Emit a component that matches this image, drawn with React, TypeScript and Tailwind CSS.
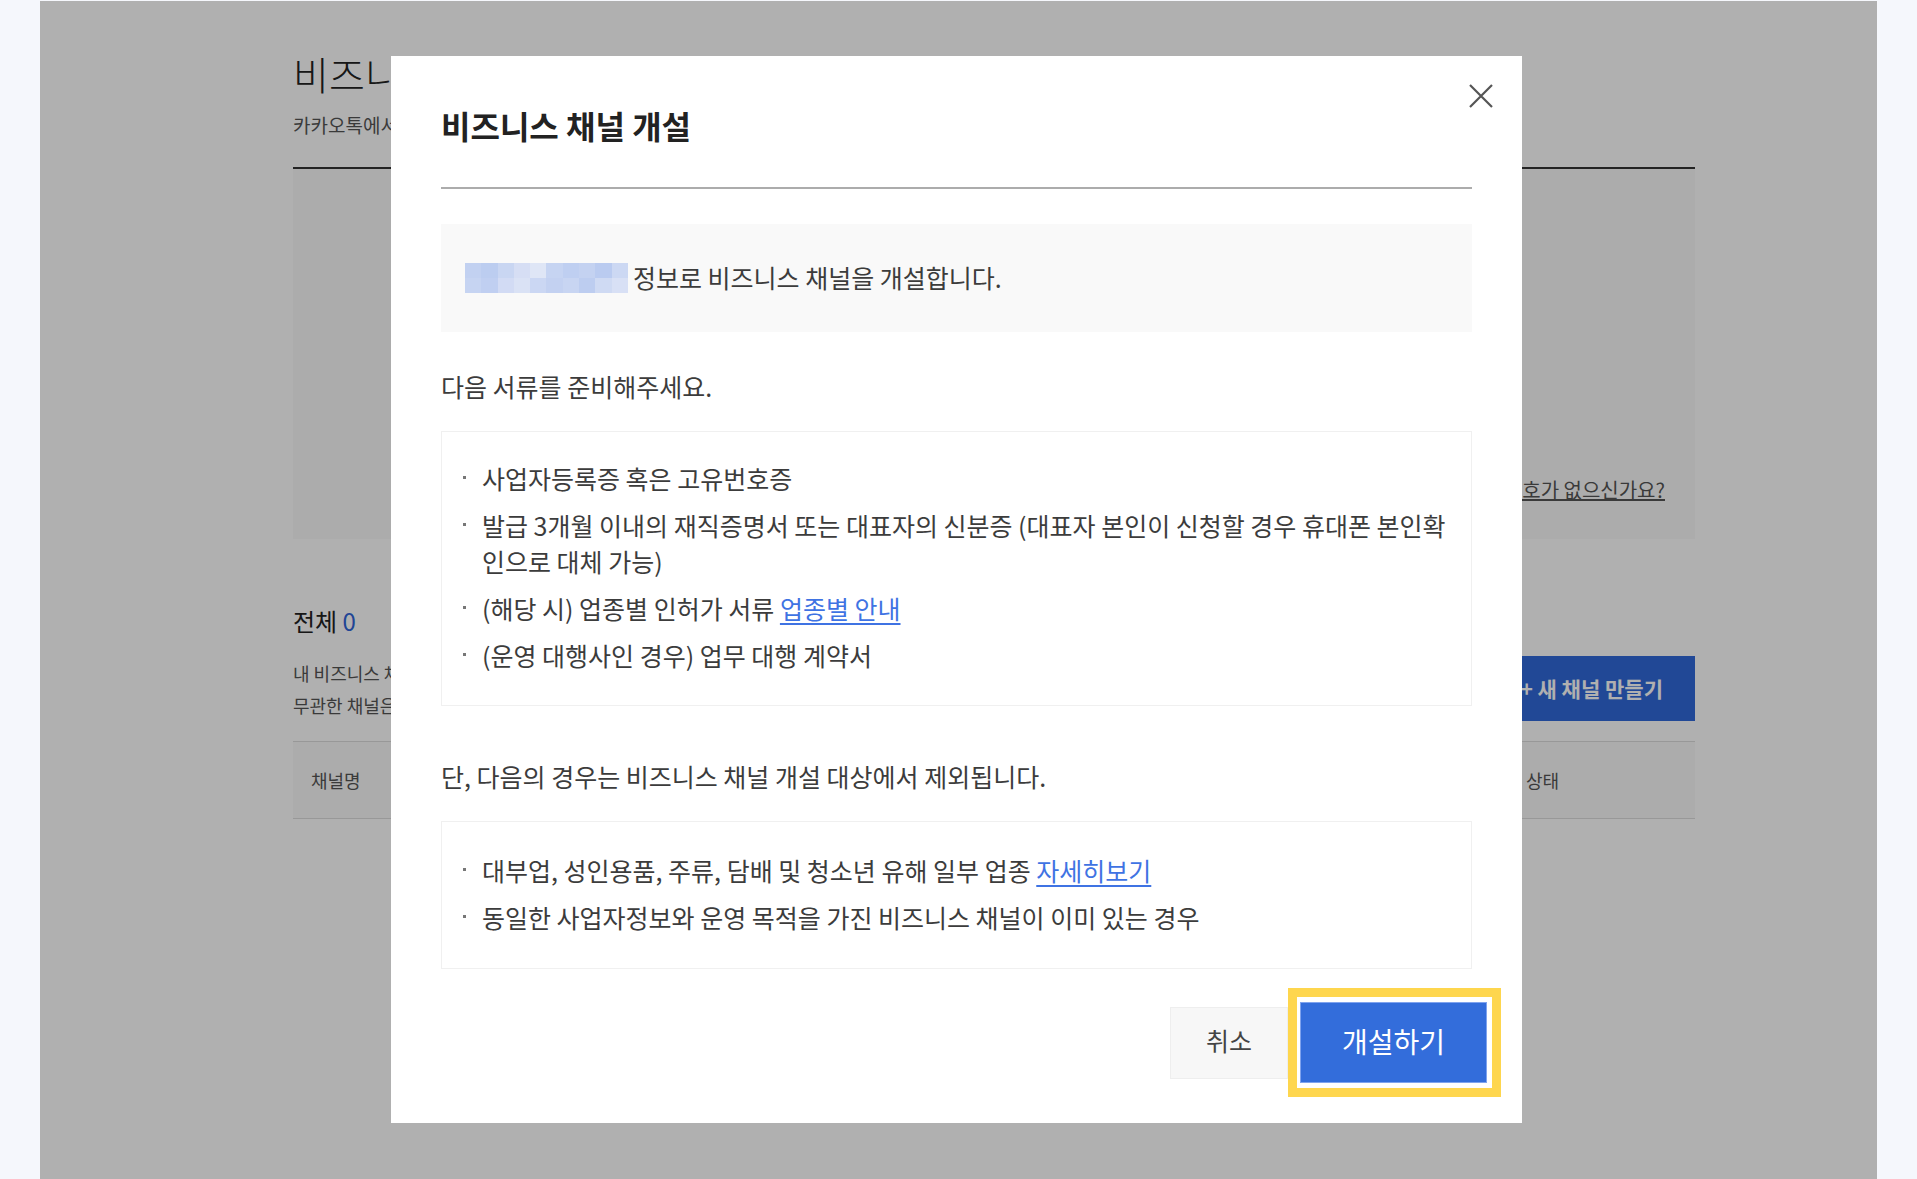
import { ReactNode } from "react"

const FONT = "font-['Noto_Sans_CJK_KR','Noto_Sans',sans-serif]"

// 가려진 업체명 (모자이크)
const MOSAIC_TOP = [
  "bg-[#c2d1f1]", "bg-[#bccdf0]", "bg-[#c9d6f2]", "bg-[#d6def4]", "bg-[#dfe6f6]",
  "bg-[#c6d4f2]", "bg-[#bfcff1]", "bg-[#c4d2f1]", "bg-[#bacbf0]", "bg-[#ccd8f3]",
]
const MOSAIC_BOTTOM = [
  "bg-[#c6d4f2]", "bg-[#c0cff1]", "bg-[#d2dbf4]", "bg-[#dae2f5]", "bg-[#cbd7f3]",
  "bg-[#c3d1f1]", "bg-[#c8d5f2]", "bg-[#bdcdf0]", "bg-[#cfdaf3]", "bg-[#d8e0f5]",
]

function Mosaic() {
  return (
    <div className="flex flex-col w-[163px] h-[30px] shrink-0">
      <div className="flex flex-1">
        {MOSAIC_TOP.map((c, i) => (
          <div key={i} className={`flex-1 ${c}`} />
        ))}
      </div>
      <div className="flex flex-1">
        {MOSAIC_BOTTOM.map((c, i) => (
          <div key={i} className={`flex-1 ${c}`} />
        ))}
      </div>
    </div>
  )
}

function Bullet({ children }: { children: ReactNode }) {
  return (
    <li className="flex">
      <span className="w-[19px] h-[36px] shrink-0 flex items-center">
        <span className="w-[3px] h-[3px] bg-[#777] -mt-[2px]" />
      </span>
      <span className="flex-1">{children}</span>
    </li>
  )
}

function BusinessChannelPage() {
  return (
    <div className="w-[1402px] ml-[253px] pt-[48px]">
      <h1 className="text-[39px] leading-[48px] font-light text-[#222]">비즈니스 채널 개설하기</h1>
      <p className="mt-[15px] text-[19px] leading-[26px] text-[#555]">카카오톡에서</p>
      <div className="mt-[29px] h-[2px] bg-[#333]" />
      <div className="h-[370px] bg-[#fafafa] flex items-end justify-end pr-[30px] pb-[36px]">
        <a className="text-[20px] leading-[26px] text-[#555] underline">사업자등록번호가 없으신가요?</a>
      </div>

      <div className="mt-[66px] text-[24px] leading-[32px] text-[#222]">
        전체 <span className="text-[#2f64d8]">0</span>
      </div>
      <div className="mt-[19px] flex justify-between items-center">
        <div className="text-[18px] leading-[32px] text-[#555]">
          <p>내 비즈니스 채널</p>
          <p>무관한 채널은</p>
        </div>
        <button className="h-[65px] px-[32px] bg-[#3069d9] text-white text-[21px] font-bold">+ 새 채널 만들기</button>
      </div>

      <div className="mt-[20px] flex h-[78px] items-center bg-[#fafafa] border-y border-[#ddd] text-[18px] text-[#555]">
        <div className="flex-1 pl-[18px]">채널명</div>
        <div className="w-[169px]">상태</div>
      </div>
    </div>
  )
}

function CreateChannelModal() {
  return (
    <div className="absolute left-[351px] top-[55px] w-[1131px] h-[1067px] bg-white px-[50px] pt-[49px] text-[#3c3c3c]">
      <button className="absolute right-[28px] top-[27px] w-[26px] h-[26px]" aria-label="닫기">
        <svg viewBox="0 0 26 26" className="w-full h-full" fill="none" stroke="#555" strokeWidth="2.2">
          <path d="M2 2L24 24M24 2L2 24" />
        </svg>
      </button>

      <h2 className="text-[32px] leading-[40px] font-bold text-[#222]">비즈니스 채널 개설</h2>
      <div className="mt-[42px] h-[2px] bg-[#acacac]" />

      <div className="mt-[35px] h-[108px] bg-[#f9f9f9] flex items-center pl-[24px] gap-[5px]">
        <Mosaic />
        <span className="text-[25px] leading-[32px] -mt-[3px]">정보로 비즈니스 채널을 개설합니다.</span>
      </div>

      <p className="mt-[38px] text-[25px] leading-[32px]">다음 서류를 준비해주세요.</p>

      <ul className="mt-[29px] border border-[#f0f0f0] pt-[28px] pb-[32px] pl-[21px] pr-[18px] text-[25px] leading-[36px] flex flex-col gap-[11px]">
        <Bullet>사업자등록증 혹은 고유번호증</Bullet>
        <Bullet>발급 3개월 이내의 재직증명서 또는 대표자의 신분증 (대표자 본인이 신청할 경우 휴대폰 본인확인으로 대체 가능)</Bullet>
        <Bullet>
          (해당 시) 업종별 인허가 서류 <a className="text-[#3f73e3] underline underline-offset-4">업종별 안내</a>
        </Bullet>
        <Bullet>(운영 대행사인 경우) 업무 대행 계약서</Bullet>
      </ul>

      <p className="mt-[54px] text-[25px] leading-[32px]">단, 다음의 경우는 비즈니스 채널 개설 대상에서 제외됩니다.</p>

      <ul className="mt-[29px] border border-[#f0f0f0] pt-[30px] pb-[33px] pl-[21px] pr-[18px] text-[25px] leading-[36px] flex flex-col gap-[11px]">
        <Bullet>
          대부업, 성인용품, 주류, 담배 및 청소년 유해 일부 업종 <a className="text-[#3f73e3] underline underline-offset-4">자세히보기</a>
        </Bullet>
        <Bullet>동일한 사업자정보와 운영 목적을 가진 비즈니스 채널이 이미 있는 경우</Bullet>
      </ul>

      <div className="mt-[19px] -mr-[29px] flex justify-end items-center">
        <button className="w-[118px] h-[72px] pb-[4px] bg-[#f7f7f7] border border-[#eee] text-[25px] text-[#444]">취소</button>
        <div className="border-[9px] border-[#fed64e] bg-white pl-[3px] pr-[5px] py-[5px]">
          <button className="w-[187px] h-[81px] pb-[4px] bg-[#336ddb] border border-[#7fa3ee] text-white text-[28px]">개설하기</button>
        </div>
      </div>
    </div>
  )
}

export default function App() {
  return (
    <div className={`${FONT} h-[1179px] bg-[#f5f7fc] px-[40px] pt-px overflow-hidden`}>
      <div className="relative h-full bg-white overflow-hidden">
        <BusinessChannelPage />
        <div className="absolute inset-0 bg-black/[0.31]" />
        <CreateChannelModal />
      </div>
    </div>
  )
}
